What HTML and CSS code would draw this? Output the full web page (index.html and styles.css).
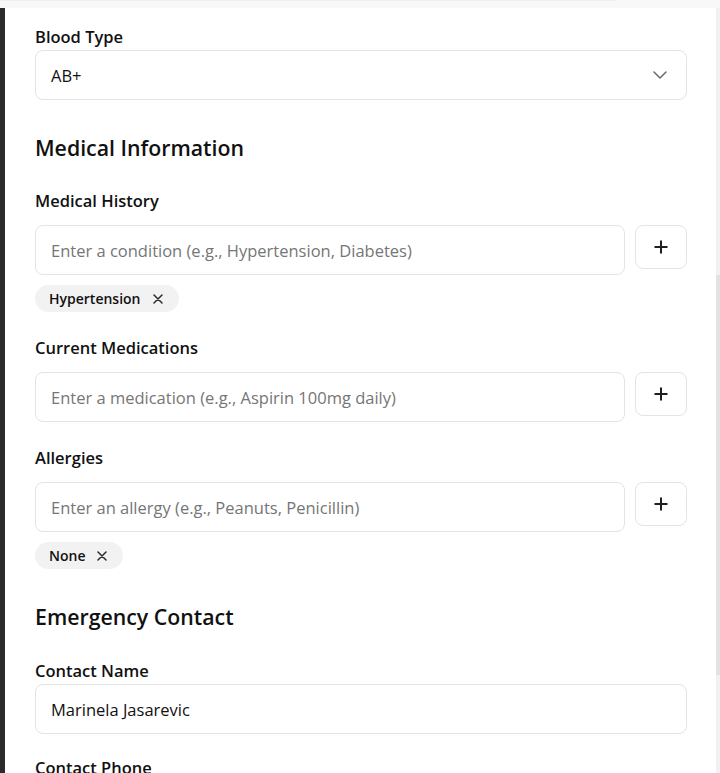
FILE: index.html
```html
<!DOCTYPE html>
<html lang="en">
<head>
<meta charset="utf-8">
<title>Medical Form</title>
<link rel="stylesheet" href="styles.css">
</head>
<body>
<div class="topbar"><div class="topbar-track"></div></div>
<div class="frame">
  <div class="backdrop"></div>
  <div class="sheet">
    <div class="content">
      <div class="field">
        <label class="label">Blood Type</label>
        <div class="select">
          <span>AB+</span>
          <svg class="chev" width="14" height="8" viewBox="0 0 14 8"><path d="M1 1l6 6 6-6" fill="none" stroke="#6b6b6b" stroke-width="1.5" stroke-linecap="round" stroke-linejoin="round"/></svg>
        </div>
      </div>

      <h2 class="heading">Medical Information</h2>

      <div class="field list">
        <label class="label">Medical History</label>
        <div class="row">
          <div class="input placeholder">Enter a condition (e.g., Hypertension, Diabetes)</div>
          <button class="add"><svg width="14" height="14" viewBox="0 0 14 14"><path d="M7 0.5v13M0.5 7h13" stroke="#1f1f1f" stroke-width="2"/></svg></button>
        </div>
        <div class="chips">
          <span class="chip">Hypertension<svg class="x" width="10" height="10" viewBox="0 0 10 10"><path d="M1 1l8 8M9 1l-8 8" stroke="#2a2a2a" stroke-width="1.5" stroke-linecap="round"/></svg></span>
        </div>
      </div>

      <div class="field list">
        <label class="label">Current Medications</label>
        <div class="row">
          <div class="input placeholder">Enter a medication (e.g., Aspirin 100mg daily)</div>
          <button class="add"><svg width="14" height="14" viewBox="0 0 14 14"><path d="M7 0.5v13M0.5 7h13" stroke="#1f1f1f" stroke-width="2"/></svg></button>
        </div>
      </div>

      <div class="field list">
        <label class="label">Allergies</label>
        <div class="row">
          <div class="input placeholder">Enter an allergy (e.g., Peanuts, Penicillin)</div>
          <button class="add"><svg width="14" height="14" viewBox="0 0 14 14"><path d="M7 0.5v13M0.5 7h13" stroke="#1f1f1f" stroke-width="2"/></svg></button>
        </div>
        <div class="chips">
          <span class="chip">None<svg class="x" width="10" height="10" viewBox="0 0 10 10"><path d="M1 1l8 8M9 1l-8 8" stroke="#2a2a2a" stroke-width="1.5" stroke-linecap="round"/></svg></span>
        </div>
      </div>

      <h2 class="heading">Emergency Contact</h2>

      <div class="field">
        <label class="label">Contact Name</label>
        <div class="input value">Marinela Jasarevic</div>
      </div>

      <div class="field">
        <label class="label">Contact Phone</label>
        <div class="input value"></div>
      </div>
    </div>
    <div class="scrollbar"><div class="thumb"></div></div>
  </div>
</div>
</body>
</html>
```

FILE: styles.css
```css
* { box-sizing: border-box; }
html, body { margin: 0; padding: 0; }
body {
  width: 720px;
  height: 773px;
  overflow: hidden;
  background: #f7f7f7;
  font-family: "Open Sans", "Noto Sans", sans-serif;
  color: #111;
}
.topbar {
  height: 8px;
  background: #f8f8f8;
}
.topbar-track {
  width: 617px;
  height: 1px;
  background: #f0f0f0;
}
.frame {
  display: flex;
  height: 765px;
}
.backdrop {
  width: 5px;
  background: #2b2b2b;
  flex: none;
}
.sheet {
  flex: 1;
  display: flex;
  background: #fff;
  overflow: hidden;
}
.content {
  flex: 1;
  padding: 17px 29px 0 30px;
}
.scrollbar {
  width: 4px;
  background: #f1f1f1;
  flex: none;
  padding-top: 267px;
}
.thumb {
  height: 400px;
  background: #e2e2e2;
}
.field { display: flex; flex-direction: column; }
.label {
  font-size: 16.5px;
  font-weight: 600;
  line-height: 24px;
  margin-bottom: 1px;
}
.field.list .label { margin-bottom: 12px; }
.select, .input {
  height: 50px;
  border: 1px solid #e4e4e4;
  border-radius: 8px;
  background: #fff;
  display: flex;
  align-items: center;
  padding: 0 15px;
  font-size: 16.5px;
}
.select { justify-content: space-between; padding-right: 19px; }
.chev { display: block; }
.placeholder { color: #767676; }
.value { color: #111; }
.row {
  display: flex;
  align-items: flex-start;
  gap: 10px;
}
.row .input { flex: 1; }
.add {
  width: 52px;
  height: 44px;
  border: 1px solid #e4e4e4;
  border-radius: 8px;
  background: #fff;
  display: flex;
  align-items: center;
  justify-content: center;
  padding: 0;
}
.chips {
  display: flex;
  gap: 8px;
  margin-top: 10px;
}
.chip {
  display: inline-flex;
  align-items: center;
  gap: 12px;
  height: 27px;
  padding: 0 16px 0 14px;
  border-radius: 14px;
  background: #f2f2f2;
  font-size: 14px;
  font-weight: 600;
}
.heading {
  font-size: 21.3px;
  font-weight: 600;
  line-height: 28px;
  margin: 34px 0 27px;
}
.field.list + .heading { margin-bottom: 28px; }
.field + .field { margin-top: 22px; }
.field.list + .field.list { margin-top: 24px; }
```
